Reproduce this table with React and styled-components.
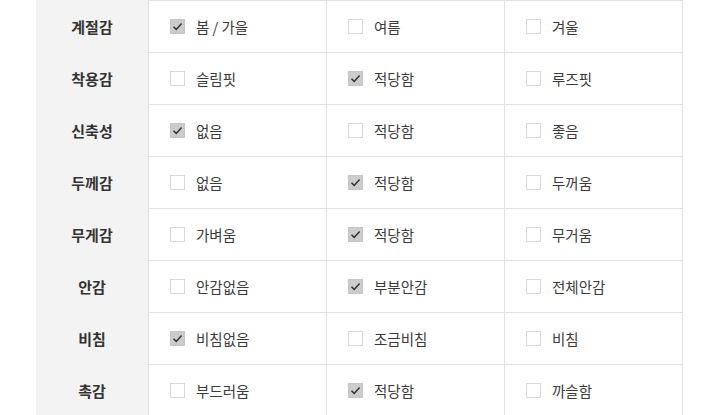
import React from "react";
import styled, { createGlobalStyle } from "styled-components";

const Global = createGlobalStyle`
  html, body { margin: 0; padding: 0; background: #fff; }
  body { font-family: "Noto Sans CJK KR", "Noto Sans", sans-serif; }
`;

const Table = styled.div`
  margin-left: 36px;
  display: grid;
  grid-template-columns: 112px repeat(3, 178px) 1px;
  width: 647px;
`;

const Label = styled.div`
  background: #f3f3f3;
  height: 52px;
  display: flex;
  align-items: center;
  justify-content: center;
  font-size: 15px;
  font-weight: 700;
  color: #333;
`;

const Cell = styled.div`
  box-sizing: border-box;
  height: 52px;
  border-top: 1px solid #e1e1e1;
  border-left: 1px solid #e1e1e1;
  display: flex;
  align-items: center;
  padding-left: 21px;
  gap: 11px;
  font-size: 14.5px;
  color: #3a3a3a;
`;

const EndLine = styled.div`
  background: #e1e1e1;
  height: 52px;
`;

const Box = styled.span`
  box-sizing: border-box;
  width: 15px;
  height: 15px;
  flex: none;
  border: 1px solid ${(p) => (p.$checked ? "#c6c6c6" : "#d9d9d9")};
  background: ${(p) => (p.$checked ? "#cccccc" : "#fff")};
  display: flex;
  align-items: center;
  justify-content: center;
`;

const Check = () => (
  <svg width="11" height="11" viewBox="0 0 11 11">
    <path d="M1.5 5.8 L4.2 8.4 L9.6 2.6" fill="none" stroke="#333" strokeWidth="1.5" />
  </svg>
);

const rows = [
  ["계절감", ["봄 / 가을", "여름", "겨울"], 0],
  ["착용감", ["슬림핏", "적당함", "루즈핏"], 1],
  ["신축성", ["없음", "적당함", "좋음"], 0],
  ["두께감", ["없음", "적당함", "두꺼움"], 1],
  ["무게감", ["가벼움", "적당함", "무거움"], 1],
  ["안감", ["안감없음", "부분안감", "전체안감"], 1],
  ["비침", ["비침없음", "조금비침", "비침"], 0],
  ["촉감", ["부드러움", "적당함", "까슬함"], 1],
];

export default function App() {
  return (
    <>
      <Global />
      <Table>
        {rows.map(([label, opts, sel]) => (
          <React.Fragment key={label}>
            <Label>{label}</Label>
            {opts.map((o, i) => (
              <Cell key={i}>
                <Box $checked={i === sel}>{i === sel && <Check />}</Box>
                <span>{o}</span>
              </Cell>
            ))}
            <EndLine />
          </React.Fragment>
        ))}
      </Table>
    </>
  );
}
